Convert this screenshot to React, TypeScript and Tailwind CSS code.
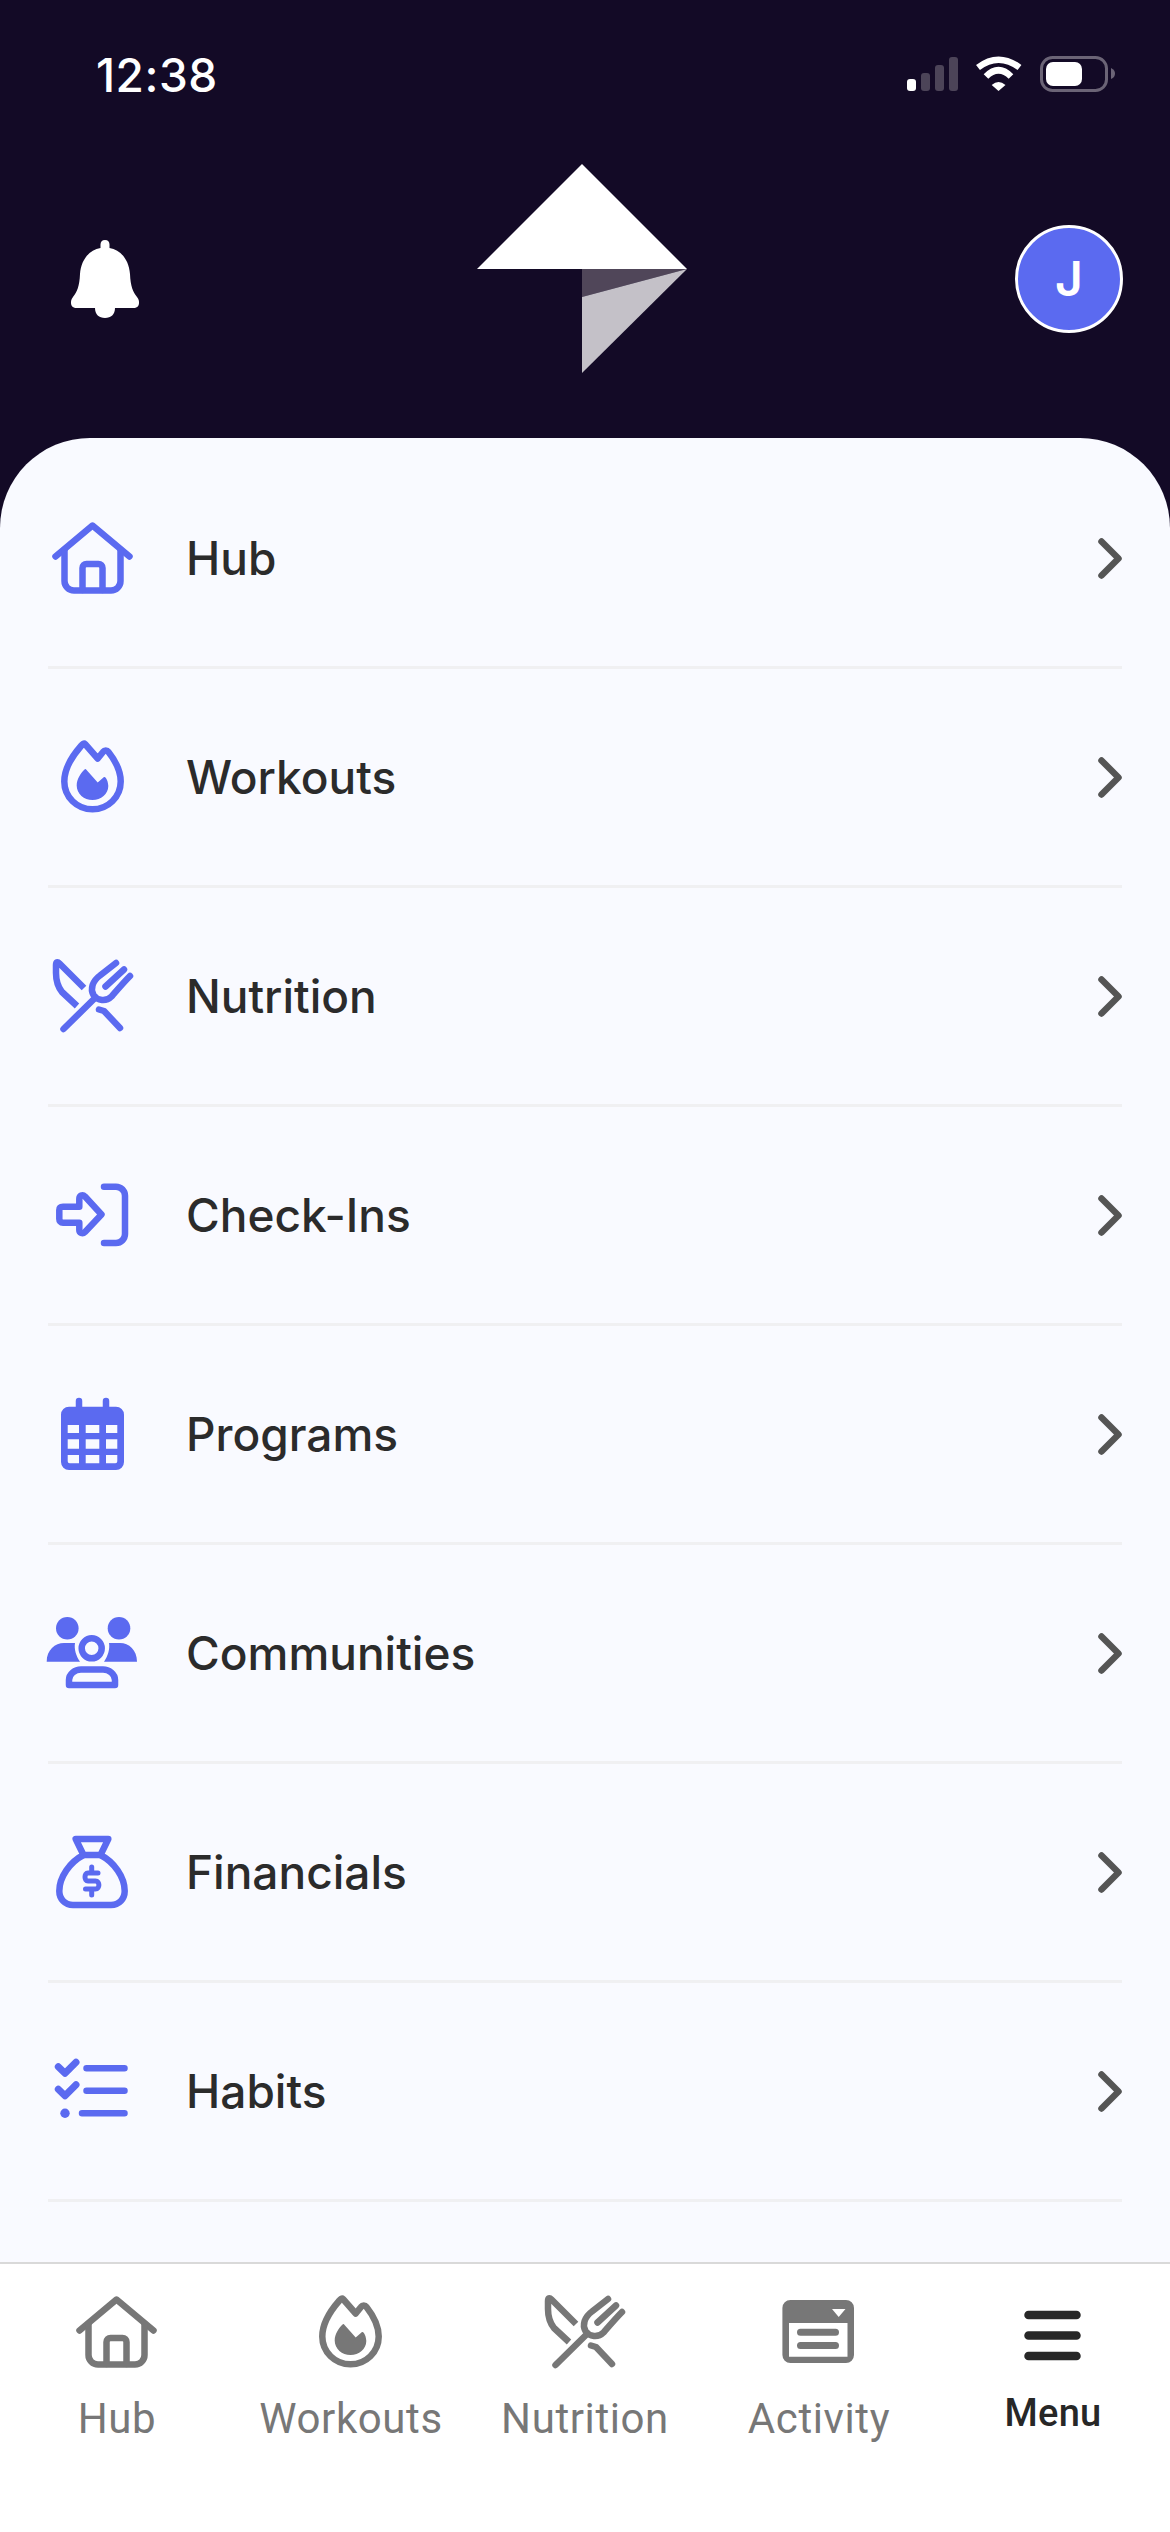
import type { ReactNode } from 'react';

const Icon = ({ children, className = '' }: { children: ReactNode; className?: string }) => (
  <svg
    viewBox="0 0 90 90"
    fill="none"
    stroke="currentColor"
    strokeWidth={6.5}
    strokeLinecap="round"
    strokeLinejoin="round"
    className={`w-[90px] h-[90px] shrink-0 overflow-visible ${className}`}
  >
    {children}
  </svg>
);

const HomeIcon = () => (
  <Icon>
    <path d="M7.5 43.5L44.5 12.5L81.5 43.5" />
    <path d="M16.5 37V68a9.5 9.5 0 0 0 9.5 9.5H63a9.5 9.5 0 0 0 9.5-9.5V37" />
    <path d="M34.5 77V55a4 4 0 0 1 4-4H50.5a4 4 0 0 1 4 4V77" />
  </Icon>
);

const FlameIcon = () => (
  <Icon>
    <path d="M37 12L49.7 26.5L55 20C56.5 18 59 18 60.5 20C66 27 72.7 38 72.7 49.5C72.7 65 60 77.3 44.5 77.3C29 77.3 16.3 65 16.3 49.5C16.3 35 26 22 33 14C34.5 12 36 11 37 12Z" />
    <path
      fill="currentColor"
      stroke="none"
      d="M37.7 37L49.7 50.5L56 45C58 44 60.3 50 60.3 54C60.3 62 53 68 44.5 68C36 68 28.7 62 28.7 53.5C28.7 47 33 41 36 38C36.6 37.3 37.2 37 37.7 37Z"
    />
  </Icon>
);

const ForkKnifeIcon = () => (
  <Icon>
    <path strokeLinecap="butt" d="M36 37L11.5 12.5C9.5 10.5 8 11 8 14V22C8 29 10 36 14 41L29 55" />
    <path d="M51 58.5L56 60L72 77" />
    <path d="M68 12L52 24.5C44.5 30 42 38 45.5 44C49.5 50 58 51 63.5 45.5C70 38 76 31 82 25" />
    <path d="M57.5 35.5L76 18.5" />
    <path d="M15.5 78L47 47" />
  </Icon>
);

const CheckInIcon = () => (
  <Icon>
    <path d="M56 16.7H68a9 9 0 0 1 9 9V64a9 9 0 0 1-9 9H56" />
    <path d="M15 36.7H31.3V29C31.3 25.5 34.5 24 37 26.5L53.5 44.5L37 62C34.5 64.5 31.3 63 31.3 60V52.7H15C12.5 52.7 11.3 51 11.3 49V40C11.3 38 12.5 36.7 15 36.7Z" />
  </Icon>
);

const CalendarIcon = () => (
  <Icon>
    <path d="M31 12V20M58 12V20" />
    <path
      stroke="none"
      fill="currentColor"
      fillRule="evenodd"
      d="M21 17.7H68a8 8 0 0 1 8 8V73a8 8 0 0 1-8 8H21a8 8 0 0 1-8-8V25.7a8 8 0 0 1 8-8ZM19.7 36V44H31V36ZM37.7 36V44H51.3V36ZM58 36V44H69.3V36ZM19.7 50.3V59.7H31V50.3ZM37.7 50.3V59.7H51.3V50.3ZM58 50.3V59.7H69.3V50.3ZM19.7 66V72.3a2 2 0 0 0 2 2H31V66ZM37.7 66V74.3H51.3V66ZM58 66V74.3H67.3a2 2 0 0 0 2-2V66Z"
    />
  </Icon>
);

const CommunityIcon = () => (
  <Icon>
    <g fill="currentColor" stroke="none">
      <circle cx="19.3" cy="20.3" r="11.3" />
      <circle cx="71" cy="20.3" r="11.3" />
      <path d="M-1.3 53.7C-1.3 42 7 35 16 35H27C26 41 28 48 32 53.7Z" />
      <path d="M89 53.7C89 42 81 35 72 35H61C62 41 60 48 56 53.7Z" />
    </g>
    <circle cx="43.7" cy="40.3" r="10" />
    <path d="M21 77V72C21 66 27 61.5 33 61.5H55C61 61.5 67 66 67 72V77Z" />
  </Icon>
);

const MoneyBagIcon = () => (
  <Icon>
    <path d="M27.7 12H60.3L52.5 28H35.5Z" />
    <path d="M35.5 28C22 35 11.3 50 11.3 64C11.3 72 17 78 25 78H63C71 78 76.7 72 76.7 64C76.7 50 66 35 52.5 28" />
    <path strokeWidth={5} d="M50 46H40C36 46 36 54 40 54H47.5C52 54 52 62 47.5 62H37.5M43.7 40V46M43.7 62V68" />
  </Icon>
);

const HabitsIcon = () => (
  <Icon>
    <path strokeWidth={7} d="M10.3 20.7L17 27.3L28 16.3M10.3 43.2L17 49.8L28 38.8" />
    <path d="M38.5 22.3H76.5M38.5 44.8H76.5M34 67.3H76.5" />
    <circle cx="17" cy="67.3" r="4.7" fill="currentColor" stroke="none" />
  </Icon>
);

const ActivityIcon = () => (
  <Icon>
    <path
      stroke="none"
      fill="currentColor"
      fillRule="evenodd"
      d="M16.4 13H72a8 8 0 0 1 8 8V68a8 8 0 0 1-8 8H16.4a8 8 0 0 1-8-8V21a8 8 0 0 1 8-8ZM15 36V69.7H73.5V36ZM58 22L64.7 30L71.5 22Z"
    />
    <path strokeWidth={7} d="M26.5 45.2H61.5M26.5 58.5H61.5" />
  </Icon>
);

const MenuIcon = () => (
  <Icon>
    <path strokeWidth={8.5} d="M20.5 28H68.5M20.5 48.5H68.5M20.5 69H68.5" />
  </Icon>
);

const Chevron = () => (
  <svg
    viewBox="0 0 24 41"
    fill="none"
    stroke="#555555"
    strokeWidth={6.5}
    strokeLinecap="round"
    strokeLinejoin="round"
    className="w-[24px] h-[41px] shrink-0"
  >
    <path d="M3.500 3.500L20.500 20.500L3.500 37.500" />
  </svg>
);

const menuItems = [
  { label: 'Hub', icon: <HomeIcon /> },
  { label: 'Workouts', icon: <FlameIcon /> },
  { label: 'Nutrition', icon: <ForkKnifeIcon /> },
  { label: 'Check-Ins', icon: <CheckInIcon /> },
  { label: 'Programs', icon: <CalendarIcon /> },
  { label: 'Communities', icon: <CommunityIcon /> },
  { label: 'Financials', icon: <MoneyBagIcon /> },
  { label: 'Habits', icon: <HabitsIcon /> },
];

const tabs = [
  { label: 'Hub', icon: <HomeIcon /> },
  { label: 'Workouts', icon: <FlameIcon /> },
  { label: 'Nutrition', icon: <ForkKnifeIcon /> },
  { label: 'Activity', icon: <ActivityIcon /> },
];

const StatusIcons = () => (
  <svg viewBox="0 0 208 38" className="w-[208px] h-[38px]">
    <rect x="0" y="24" width="9" height="12" rx="3" fill="#ffffff" />
    <rect x="14" y="18" width="9" height="18" rx="3" fill="#4c4458" />
    <rect x="28" y="10" width="9" height="26" rx="3" fill="#4c4458" />
    <rect x="42" y="2" width="9" height="34" rx="3" fill="#4c4458" />
    <path
      fill="none"
      stroke="#ffffff"
      strokeWidth={6.5}
      d="M71 12.500Q91.500 -3 112.500 12.500M79 21.500Q91.500 9 104 21.500"
    />
    <path fill="#ffffff" d="M84.700 30Q91.500 24 98.500 30L91.500 36Z" />
    <rect x="134.500" y="2.500" width="65" height="33" rx="11" fill="none" stroke="#6b6476" strokeWidth={3} />
    <rect x="139" y="7" width="36" height="24" rx="7" fill="#ffffff" />
    <path d="M204 13C207 14.500 208 16.500 208 18.500C208 20.500 207 23 204 24Z" fill="#6b6476" />
  </svg>
);

const App = () => {
  return (
    <div className="relative flex flex-col w-[1170px] h-[2532px] overflow-hidden bg-[#130a26] font-['Inter',sans-serif]">
      <div className="flex flex-col h-[438px] shrink-0">
        <div className="flex items-center justify-between h-[38px] mt-[55px] pl-[96px] pr-[55px] text-white">
          <span className="text-[46px] leading-[38px] font-medium tracking-[0.5px] pt-[2px]">12:38</span>
          <StatusIcons />
        </div>
        <div className="flex items-start mt-[71px] pl-[71px] pr-[47px]">
          <svg viewBox="0 0 68 78" fill="#ffffff" className="w-[68px] h-[78px] mt-[76px] shrink-0">
            <path d="M34 0C37 0 38.500 2 38.500 4.500V8C50 10 58 20 59 34C59.500 46 62 52 66 57C68 59.500 68 61 68 63C68 66 66 68 62 68H44C44 74.500 40 78 34 78C28 78 24 74.500 24 68H6C2 68 0 66 0 63C0 61 0 59.500 2 57C6 52 8.500 46 9 34C10 20 18 10 29.500 8V4.500C29.500 2 31 0 34 0Z" />
          </svg>
          <svg viewBox="0 0 210 209" className="w-[210px] h-[209px] ml-[338px] shrink-0">
            <path d="M105 0L210 105H0Z" fill="#ffffff" />
            <path d="M105 105H210L105 133Z" fill="#504659" />
            <path d="M105 133L210 105L105 209Z" fill="#c4c1c8" />
          </svg>
          <div className="flex items-center justify-center w-[108px] h-[108px] mt-[61px] ml-auto rounded-full border-[3px] border-white bg-[#5b6af0] text-white text-[48px] font-semibold">
            J
          </div>
        </div>
      </div>
      <main className="flex-1 flex flex-col pt-[12px] px-[48px] rounded-t-[90px] bg-[#f9faff]">
        {menuItems.map((item) => (
          <div
            key={item.label}
            className="flex items-center h-[219px] shrink-0 border-b-[3px] border-[#f0f0f2] text-[#5b6af0]"
          >
            {item.icon}
            <span className="ml-[48px] text-[46px] font-medium text-[#2b2b2b]">{item.label}</span>
            <div className="ml-auto">
              <Chevron />
            </div>
          </div>
        ))}
      </main>
      <nav className="grid grid-cols-5 h-[270px] shrink-0 pt-[23px] border-t-2 border-[#d9d9d9] bg-white font-['Roboto',sans-serif]">
        {tabs.map((tab) => (
          <div key={tab.label} className="flex flex-col items-center text-[#777777]">
            {tab.icon}
            <span className="mt-[17px] text-[42px] leading-[50px] tracking-[0.6px]">{tab.label}</span>
          </div>
        ))}
        <div className="flex flex-col items-center text-[#272727]">
          <MenuIcon />
          <span className="mt-[13px] text-[38px] leading-[46px] font-medium tracking-[0.3px]">Menu</span>
        </div>
      </nav>
    </div>
  );
};

export default App;
